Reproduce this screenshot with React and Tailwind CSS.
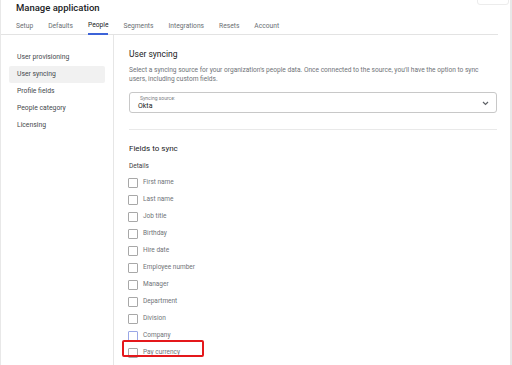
import React from 'react';

const tabs = ['Setup', 'Defaults', 'People', 'Segments', 'Integrations', 'Resets', 'Account'];
const sideItems = ['User provisioning', 'User syncing', 'Profile fields', 'People category', 'Licensing'];
const fields = [
  'First name',
  'Last name',
  'Job title',
  'Birthday',
  'Hire date',
  'Employee number',
  'Manager',
  'Department',
  'Division',
  'Company',
];

const Checkbox = ({ blue }) => (
  <span
    className={`block w-[10px] h-[10px] rounded-[1px] border bg-white ${
      blue ? 'border-[#9aa7e6]' : 'border-[#a8a8a8]'
    }`}
  />
);

const App = () => {
  return (
    <div className="relative w-[512px] h-[365px] overflow-hidden bg-white border-l border-r-2 border-[#e8e8e8] font-['Roboto',sans-serif] text-[#202124]">
      {/* scroll thumb remnant top right */}
      <div className="absolute -top-[10px] right-[1px] w-[32px] h-[15px] rounded-[3px] border border-[#ececec]" />

      {/* Header */}
      <div className="pl-[15px] pt-[1px] h-[14px] text-[9.5px] leading-[13px] font-medium">Manage application</div>
      <div className="flex h-[21px] w-[497px] border-b border-[#e3e3e3] pl-[15px] gap-[15px]">
        {tabs.map((t) => (
          <div
            key={t}
            className={`flex items-center pt-[4px] text-[6.7px] ${
              t === 'People'
                ? 'text-[#202124] border-b-2 border-[#3c63d8] -mb-px'
                : 'text-[#6b6f74]'
            }`}
          >
            {t}
          </div>
        ))}
      </div>

      <div className="flex">
        {/* Sidebar */}
        <aside className="w-[113px] h-[330px] border-r border-[#e6e6e6] pt-[14px] shrink-0">
          {sideItems.map((s) => (
            <div
              key={s}
              className={`mx-[8px] px-[8px] h-[17px] flex items-center rounded-[2px] text-[6.8px] text-[#45484c] ${
                s === 'User syncing' ? 'bg-[#f1f1f1]' : ''
              }`}
            >
              {s}
            </div>
          ))}
        </aside>

        {/* Main */}
        <main className="pl-[15px] pt-[14px] w-[383px]">
          <h2 className="text-[8.5px] leading-[11px]">User syncing</h2>
          <p className="mt-[6px] text-[6.6px] leading-[9px] text-[#6f7378]">
            Select a syncing source for your organization's people data. Once connected to the source, you'll have the option to sync users, including custom fields.
          </p>
          <div className="mt-[8px] h-[21px] border border-[#c8c8c8] rounded-[3px] flex items-center justify-between pl-[8px] pr-[7px]">
            <div className="flex flex-col">
              <span className="text-[5px] leading-[7px] text-[#7a7e83] ml-[2px]">Syncing source:</span>
              <span className="text-[7px] leading-[9px] text-[#202124]">Okta</span>
            </div>
            <svg width="7" height="5" viewBox="0 0 7 5" className="mt-[1px]">
              <path d="M1 1l2.5 2.5L6 1" fill="none" stroke="#5f6368" strokeWidth="1.2" />
            </svg>
          </div>

          <div className="mt-[16px] border-t border-[#e9e9e9]" />

          <h3 className="mt-[13px] text-[8px] leading-[12px]">Fields to sync</h3>
          <div className="mt-[6px] text-[6.5px] leading-[10px] text-[#3c4043]">Details</div>

          <div className="mt-[3px] flex flex-col">
            {fields.map((f) => (
              <div key={f} className="h-[17px] flex items-center gap-[5px] -ml-px">
                <Checkbox blue={f === 'Company'} />
                <span className="text-[6.5px] text-[#6f7378]">{f}</span>
              </div>
            ))}
            <div className="relative h-[17px] flex items-center gap-[5px] -ml-px">
              <Checkbox />
              <span className="text-[6.5px] text-[#6f7378]">Pay currency</span>
              <div className="absolute -left-[6px] top-[-4px] w-[82px] h-[17px] border-2 border-[#e4181b] rounded-[2px]" />
            </div>
          </div>
        </main>
      </div>
    </div>
  );
};

export default App;
